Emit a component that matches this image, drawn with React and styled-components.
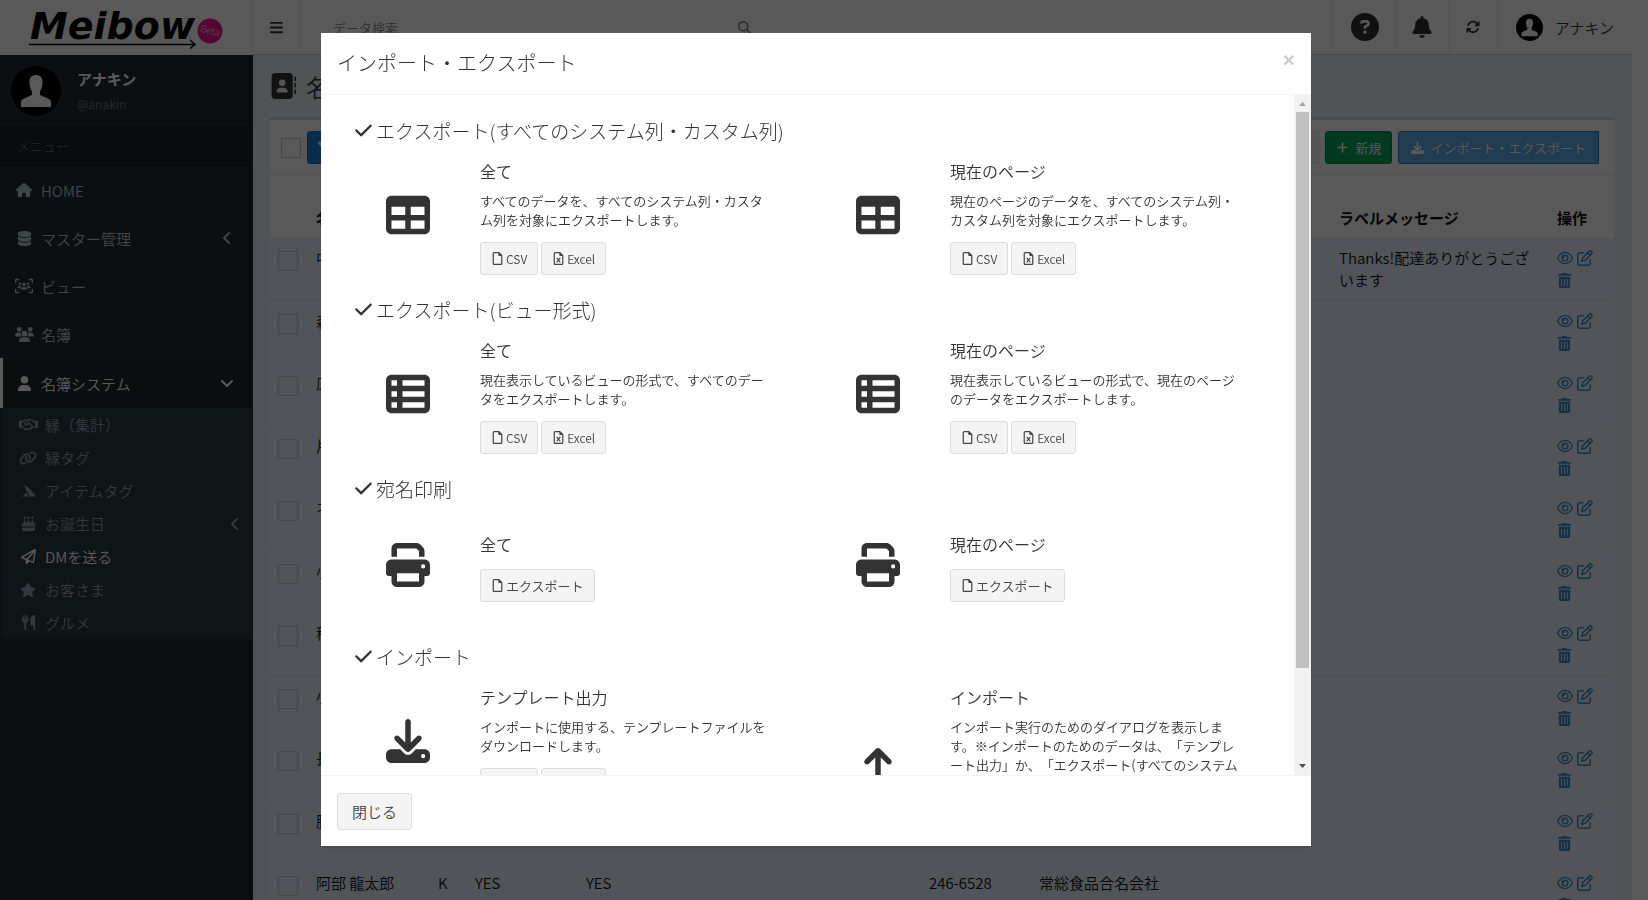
import React from "react";
import styled, { createGlobalStyle, css } from "styled-components";
import {
  FaBars, FaMagnifyingGlass, FaCircleQuestion, FaBell, FaArrowsRotate, FaHouse, FaDatabase,
  FaUsersViewfinder, FaUsers, FaUser, FaRegHandshake, FaLink, FaCakeCandles, FaRegPaperPlane,
  FaStar, FaUtensils, FaAngleLeft, FaAngleDown, FaAddressBook, FaPlus, FaDownload, FaRegEye,
  FaRegPenToSquare, FaTrashCan, FaCheck, FaTable, FaTableList, FaPrint, FaUpload, FaRegFile,
  FaRegFileExcel, FaFilter,
} from "react-icons/fa6";

const GlobalStyle = createGlobalStyle`
  * { box-sizing: border-box; }
  html, body, #root { height: 100%; }
  body {
    margin: 0;
    overflow: hidden;
    background: #fff;
    color: #333;
    font: 350 15px/21px "Noto Sans CJK JP", sans-serif;
    text-spacing-trim: space-all;
  }
  button, input { font: inherit; color: inherit; }
  a { color: inherit; text-decoration: none; }
  h1, h2, h3, p, ul { margin: 0; padding: 0; font-weight: inherit; }
  ul { list-style: none; }
  svg { flex: none; display: block; }
`;

/* ---------- page frame ---------- */

const Page = styled.div`
  height: 100%;
  padding-right: 16px;
  display: grid;
  grid-template: 55px 1fr / 253px 1fr;
  overflow: hidden;
`;

const Brand = styled.a`
  display: flex;
  border-right: 1px solid #eee;
  padding-left: 28px;
`;

const BrandMark = styled.svg`
  width: 200px;
  height: 55px;
`;

const TopBar = styled.header`
  display: flex;
  border-bottom: 1px solid #d2d6de;
`;

const TopItem = styled.button`
  display: flex;
  align-items: center;
  justify-content: center;
  gap: 12px;
  width: ${(p) => p.$width}px;
  padding: 0;
  border: 0;
  border-left: ${(p) => (p.$first ? 0 : 1)}px solid #eee;
  border-right: ${(p) => (p.$first ? 1 : 0)}px solid #eee;
  background: none;
`;

const Search = styled.label`
  flex: 1;
  display: flex;
  align-items: center;
  padding-left: 33px;
`;

const SearchInput = styled.input`
  width: 405px;
  padding: 0;
  border: 0;
  outline: 0;
  background: none;
  font-size: 13px;
  &::placeholder { color: #888; opacity: 1; }
`;

const AvatarDisc = styled.svg`
  width: ${(p) => p.$size}px;
  height: ${(p) => p.$size}px;
`;

/* ---------- sidebar ---------- */

const Sidebar = styled.aside`
  background: #222d32;
  overflow: hidden;
`;

const UserPanel = styled.div`
  display: flex;
  gap: 16px;
  padding: 11px;
  height: 72px;
`;

const UserName = styled.p`
  margin-top: 2px;
  color: #fff;
  font-weight: 700;
`;

const UserHandle = styled.p`
  margin-top: 4px;
  color: #6d767a;
  font-size: 12px;
  font-weight: 400;
`;

const MenuLabel = styled.p`
  height: 39px;
  padding: 8px 17px;
  background: #1a2226;
  color: #4b646f;
  font-size: 13px;
`;

const MenuLink = styled.a`
  display: flex;
  align-items: center;
  height: 48px;
  padding: 0 18px 0 11px;
  border-left: 3px solid transparent;
  color: #b8c7ce;
  ${(p) => p.$active && css`
    height: 50px;
    border-color: #fff;
    background: #1e282c;
    color: #fff;
  `}
`;

const MenuIcon = styled.span`
  display: flex;
  justify-content: center;
  width: 20px;
  margin-right: 7px;
`;

const MenuText = styled.span`
  flex: 1;
`;

const SubMenu = styled.ul`
  margin: 0 1px;
  background: #2c3b41;
`;

const SubLink = styled.a`
  display: flex;
  align-items: center;
  height: 33px;
  padding: 0 9px 0 17px;
  color: ${(p) => (p.$active ? "#fff" : "#8aa4af")};
`;

/* ---------- list behind the dialog ---------- */

const Content = styled.main`
  padding: 14px 17px 0;
  background: #e6eff1;
  overflow: hidden;
`;

const PageTitle = styled.h1`
  display: flex;
  align-items: center;
  gap: 10px;
  height: 34px;
  font-size: 24px;
`;

const Box = styled.section`
  margin-top: 14px;
  border-top: 3px solid #d2d6de;
  border-radius: 3px;
  background: #fff;
`;

const Tools = styled.div`
  display: flex;
  align-items: center;
  gap: 6px;
  height: 56px;
  padding: 0 16px 0 11px;
  border-bottom: 1px solid #f0f0f0;
`;

const Check = styled.input`
  appearance: none;
  display: block;
  width: 20px;
  height: 20px;
  margin: 0;
  border: 1px solid #ccc;
  background: transparent;
`;

const tones = {
  plain: css`background: #f4f4f4; border-color: #ddd; color: #444;`,
  primary: css`background: #2280d8; border-color: #1b6cba; color: #fff;`,
  success: css`background: #00a65a; border-color: #008d4c; color: #fff;`,
  info: css`background: #60a8e8; border-color: #367fa9; color: #fff; border-radius: 3px 0 0 3px;`,
};

const sizes = { small: 12, normal: 13, large: 15 };

const Button = styled.button`
  display: inline-flex;
  align-items: center;
  gap: ${(p) => p.$gap || 2}px;
  height: ${(p) => (p.$size === "large" ? 37 : 33)}px;
  padding: 0 ${(p) => p.$pad || 10}px;
  border: 1px solid;
  border-radius: 3px;
  font-size: ${(p) => sizes[p.$size || "normal"]}px;
  line-height: 19px;
  white-space: nowrap;
  ${(p) => tones[p.$tone || "plain"]}
  svg { width: auto; height: 13px; }
`;

const Spacer = styled.span`
  flex: 1;
`;

const Table = styled.table`
  width: 100%;
  border-collapse: collapse;
  table-layout: fixed;
  color: #111;
  line-height: 22px;
  th, td { height: 62px; padding: 9px 8px; text-align: left; vertical-align: top; }
  td:first-child { padding: 13px 8px 0; }
  th { font-weight: 700; vertical-align: bottom; }
  tbody tr { background: #e8f0ff; }
  tbody tr:nth-child(odd) td { border-bottom: 1px solid #ececf4; }
`;

const Actions = styled.div`
  display: flex;
  flex-wrap: wrap;
  gap: 0 4px;
  width: 42px;
  color: #3c8dbc;
`;

const ActionLink = styled.a`
  display: flex;
  align-items: center;
  height: 22px;
`;

/* ---------- dialog ---------- */

const Backdrop = styled.div`
  position: fixed;
  inset: 0;
  padding: 33px 16px 54px 0;
  display: flex;
  justify-content: center;
  background: rgba(0, 0, 0, 0.65);
`;

const Dialog = styled.div`
  display: flex;
  flex-direction: column;
  width: 100%;
  max-width: 990px;
  background: #fff;
  box-shadow: 0 2px 3px rgba(0, 0, 0, 0.13);
`;

const DialogHead = styled.header`
  display: flex;
  justify-content: space-between;
  height: 62px;
  padding: 16px;
  border-bottom: 1px solid #f4f4f4;
`;

const DialogTitle = styled.h2`
  font-size: 20px;
  font-weight: 300;
  line-height: 28px;
`;

const CloseX = styled.button`
  height: 21px;
  padding: 0;
  border: 0;
  background: none;
  color: #ccc;
  font: 700 21px/21px "Liberation Sans", sans-serif;
`;

const DialogBody = styled.div`
  flex: 1;
  min-height: 0;
  display: flex;
`;

const Scroller = styled.div`
  flex: 1;
  overflow: hidden;
  padding: 20px 33px 0;
`;

const ScrollBar = styled.div`
  display: flex;
  flex-direction: column;
  width: 17px;
  background: #f1f1f1;
`;

const ScrollArrow = styled.svg`
  width: 17px;
  height: 17px;
  fill: ${(p) => p.$color};
`;

const ScrollTrack = styled.div`
  flex: 1;
  padding: 0 2px;
`;

const ScrollThumb = styled.div`
  height: 86%;
  background: #c1c1c1;
`;

const Group = styled.section`
  min-height: ${(p) => (p.$compact ? 168 : 179)}px;
`;

const GroupTitle = styled.h3`
  display: flex;
  align-items: center;
  gap: 3px;
  height: 30px;
  font-size: 19px;
  font-weight: 300;
`;

const Columns = styled.div`
  display: grid;
  grid-template-columns: 1fr 1fr;
  align-items: start;
  gap: 33px;
  padding-top: 10px;
`;

const Option = styled.div`
  display: flex;
  align-items: center;
  min-height: 104px;
`;

const OptionIcon = styled.div`
  display: flex;
  justify-content: center;
  width: 108px;
  margin-right: 18px;
`;

const OptionText = styled.div`
  width: 293px;
  padding-top: 4px;
`;

const OptionTitle = styled.p`
  font-size: 16px;
  line-height: 24px;
`;

const OptionNote = styled.p`
  margin-top: 8px;
  font-size: 13px;
  line-height: 19px;
`;

const ButtonRow = styled.div`
  display: flex;
  gap: 3px;
  margin-top: 13px;
`;

const DialogFoot = styled.footer`
  height: 71px;
  padding: 17px 16px;
  border-top: 1px solid #f4f4f4;
`;

function Avatar({ size }) {
  return (
    <AvatarDisc $size={size} viewBox="0 0 50 50" aria-hidden="true">
      <circle cx="25" cy="25" r="25" fill="#000" />
      <path fill="#fff" d="M25 9c5 0 7 3.500 6.500 8.500-.2 4-1.500 6-2.500 8v3c1 2 10.500 3.500 11 7V41H10v-5.500c.5-3.500 10-5 11-7v-3c-1-2-2.300-4-2.500-8C18 12.500 20 9 25 9z" />
    </AvatarDisc>
  );
}

function Fin() {
  return (
    <svg width="15" height="15" viewBox="0 0 15 15" fill="currentColor" aria-hidden="true">
      <path d="M3 2c5 2 8 6 12 11.500H8.500C8 10.500 6.500 8 3.500 6.500L5 6zM1 13c2-.5 3.500-2 3.800-4 1.500 1.200 2.400 2.500 2.700 4.500H1z" />
    </svg>
  );
}

const menu = [
  { text: "HOME", Icon: FaHouse, size: 16 },
  { text: "マスター管理", Icon: FaDatabase, size: 15, arrow: FaAngleLeft },
  { text: "ビュー", Icon: FaUsersViewfinder, size: 18 },
  { text: "名簿", Icon: FaUsers, size: 19 },
  { text: "名簿システム", Icon: FaUser, size: 15, arrow: FaAngleDown, active: true },
];

const subMenu = [
  { text: "縁（集計）", Icon: FaRegHandshake, size: 19 },
  { text: "縁タグ", Icon: FaLink, size: 18 },
  { text: "アイテムタグ", Icon: Fin, size: 15 },
  { text: "お誕生日", Icon: FaCakeCandles, size: 15, arrow: true },
  { text: "DMを送る", Icon: FaRegPaperPlane, size: 15, active: true },
  { text: "お客さま", Icon: FaStar, size: 16 },
  { text: "グルメ", Icon: FaUtensils, size: 15 },
];

const rows = [
  { name: "中村 太郎", label: "Thanks!配達ありがとうございます" },
  { name: "森 一郎" }, { name: "広田 恵" }, { name: "片山 進" }, { name: "ネオ" }, { name: "小林 茂" },
  { name: "稲田 実" }, { name: "小川 修" }, { name: "長野 豊" }, { name: "勝又 学" },
  { name: "阿部 龍太郎", kind: "K", a: "YES", b: "YES", zip: "246-6528", company: "常総食品合名会社" },
];

const fileButtons = [["CSV", FaRegFile, "small"], ["Excel", FaRegFileExcel, "small"]];

const groups = [
  {
    title: "エクスポート(すべてのシステム列・カスタム列)",
    options: [
      { Icon: FaTable, title: "全て", note: "すべてのデータを、すべてのシステム列・カスタム列を対象にエクスポートします。", buttons: fileButtons },
      { Icon: FaTable, title: "現在のページ", note: "現在のページのデータを、すべてのシステム列・カスタム列を対象にエクスポートします。", buttons: fileButtons },
    ],
  },
  {
    title: "エクスポート(ビュー形式)",
    options: [
      { Icon: FaTableList, title: "全て", note: "現在表示しているビューの形式で、すべてのデータをエクスポートします。", buttons: fileButtons },
      { Icon: FaTableList, title: "現在のページ", note: "現在表示しているビューの形式で、現在のページのデータをエクスポートします。", buttons: fileButtons },
    ],
  },
  {
    title: "宛名印刷",
    compact: true,
    options: [
      { Icon: FaPrint, title: "全て", buttons: [["エクスポート", FaRegFile]] },
      { Icon: FaPrint, title: "現在のページ", buttons: [["エクスポート", FaRegFile]] },
    ],
  },
  {
    title: "インポート",
    options: [
      { Icon: FaDownload, title: "テンプレート出力", note: "インポートに使用する、テンプレートファイルをダウンロードします。", buttons: fileButtons },
      { Icon: FaUpload, title: "インポート", note: "インポート実行のためのダイアログを表示します。※インポートのためのデータは、「テンプレート出力」か、「エクスポート(すべてのシステム列・カスタム列)」で出力したファイルを編集してご利用ください。", buttons: [["インポート", FaRegFile]] },
    ],
  },
];

function Logo() {
  return (
    <BrandMark viewBox="0 0 200 55" role="img" aria-label="Meibow Beta">
      <text x="2" y="39" fontFamily="DejaVu Sans" fontWeight="700" fontStyle="italic" fontSize="38">Meibow</text>
      <path d="M1 44.500H167M162 40l5 4.500-5 4" fill="none" stroke="#000" strokeWidth="1.500" />
      <circle cx="182" cy="31" r="12.500" fill="#f0188c" />
      <text x="182" y="34" textAnchor="middle" fontFamily="Lato" fontSize="10" fill="#fff" transform="rotate(14 182 31)">Beta</text>
    </BrandMark>
  );
}

export default function App() {
  return (
    <>
      <GlobalStyle />
      <Page>
        <Brand href="#"><Logo /></Brand>
        <TopBar>
          <TopItem $first $width={47} aria-label="メニュー切替"><FaBars size={15} /></TopItem>
          <Search>
            <SearchInput placeholder="データ検索" aria-label="データ検索" />
            <FaMagnifyingGlass size={13} color="#888" />
          </Search>
          <TopItem $width={62} aria-label="ヘルプ"><FaCircleQuestion size={28} /></TopItem>
          <TopItem $width={53} aria-label="通知"><FaBell size={22} /></TopItem>
          <TopItem $width={49} aria-label="更新"><FaArrowsRotate size={14} /></TopItem>
          <TopItem $width={135}><Avatar size={27} />アナキン</TopItem>
        </TopBar>

        <Sidebar>
          <UserPanel>
            <Avatar size={50} />
            <div>
              <UserName>アナキン</UserName>
              <UserHandle>@anakin</UserHandle>
            </div>
          </UserPanel>
          <MenuLabel>メニュー</MenuLabel>
          <nav>
            {menu.map(({ text, Icon, size, arrow: Arrow, active }) => (
              <MenuLink href="#" key={text} $active={active}>
                <MenuIcon><Icon size={size} /></MenuIcon>
                <MenuText>{text}</MenuText>
                {Arrow && <Arrow size={16} />}
              </MenuLink>
            ))}
            <SubMenu>
              {subMenu.map(({ text, Icon, size, arrow, active }) => (
                <li key={text}>
                  <SubLink href="#" $active={active}>
                    <MenuIcon><Icon size={size} /></MenuIcon>
                    <MenuText>{text}</MenuText>
                    {arrow && <FaAngleLeft size={16} />}
                  </SubLink>
                </li>
              ))}
            </SubMenu>
          </nav>
        </Sidebar>

        <Content>
          <PageTitle><FaAddressBook size={26} />名簿</PageTitle>
          <Box>
            <Tools>
              <Check type="checkbox" aria-label="全て選択" />
              <Button $tone="primary" $gap={4}><FaFilter />絞り込み</Button>
              <Spacer />
              <Button>表示</Button>
              <Button $tone="success" $gap={6}><FaPlus />新規</Button>
              <Button $tone="info" $gap={6} $pad={12}><FaDownload />インポート・エクスポート</Button>
            </Tools>
            <Table>
              <colgroup>
                <col width="38" /><col width="122" /><col width="37" /><col width="111" />
                <col width="343" /><col width="110" /><col width="300" /><col width="218" /><col width="66" />
              </colgroup>
              <thead>
                <tr>
                  <th /><th>名前</th><th /><th /><th /><th /><th /><th>ラベルメッセージ</th><th>操作</th>
                </tr>
              </thead>
              <tbody>
                {rows.map((r, i) => (
                  <tr key={i}>
                    <td><Check type="checkbox" aria-label={r.name} /></td>
                    <td>{r.name}</td>
                    <td>{r.kind}</td>
                    <td>{r.a}</td>
                    <td>{r.b}</td>
                    <td>{r.zip}</td>
                    <td>{r.company}</td>
                    <td>{r.label}</td>
                    <td>
                      <Actions>
                        <ActionLink href="#" aria-label="表示"><FaRegEye size={16} /></ActionLink>
                        <ActionLink href="#" aria-label="編集"><FaRegPenToSquare size={16} /></ActionLink>
                        <ActionLink href="#" aria-label="削除"><FaTrashCan size={15} /></ActionLink>
                      </Actions>
                    </td>
                  </tr>
                ))}
              </tbody>
            </Table>
          </Box>
        </Content>
      </Page>

      <Backdrop>
        <Dialog role="dialog" aria-modal="true" aria-labelledby="dialog-title">
          <DialogHead>
            <DialogTitle id="dialog-title">インポート・エクスポート</DialogTitle>
            <CloseX aria-label="閉じる">×</CloseX>
          </DialogHead>
          <DialogBody>
            <Scroller>
              {groups.map((g) => (
                <Group key={g.title} $compact={g.compact}>
                  <GroupTitle><FaCheck size={19} />{g.title}</GroupTitle>
                  <Columns>
                    {g.options.map((o) => (
                      <Option key={o.title}>
                        <OptionIcon><o.Icon size={44} /></OptionIcon>
                        <OptionText>
                          <OptionTitle>{o.title}</OptionTitle>
                          {o.note && <OptionNote>{o.note}</OptionNote>}
                          <ButtonRow>
                            {o.buttons.map(([label, Icon, size]) => (
                              <Button key={label} $size={size}><Icon />{label}</Button>
                            ))}
                          </ButtonRow>
                        </OptionText>
                      </Option>
                    ))}
                  </Columns>
                </Group>
              ))}
            </Scroller>
            <ScrollBar aria-hidden="true">
              <ScrollArrow $color="#a3a3a3" viewBox="0 0 17 17"><path d="M5 11h7L8.500 7z" /></ScrollArrow>
              <ScrollTrack><ScrollThumb /></ScrollTrack>
              <ScrollArrow $color="#505050" viewBox="0 0 17 17"><path d="M5 6h7l-3.500 4z" /></ScrollArrow>
            </ScrollBar>
          </DialogBody>
          <DialogFoot><Button $size="large" $pad={14}>閉じる</Button></DialogFoot>
        </Dialog>
      </Backdrop>
    </>
  );
}
